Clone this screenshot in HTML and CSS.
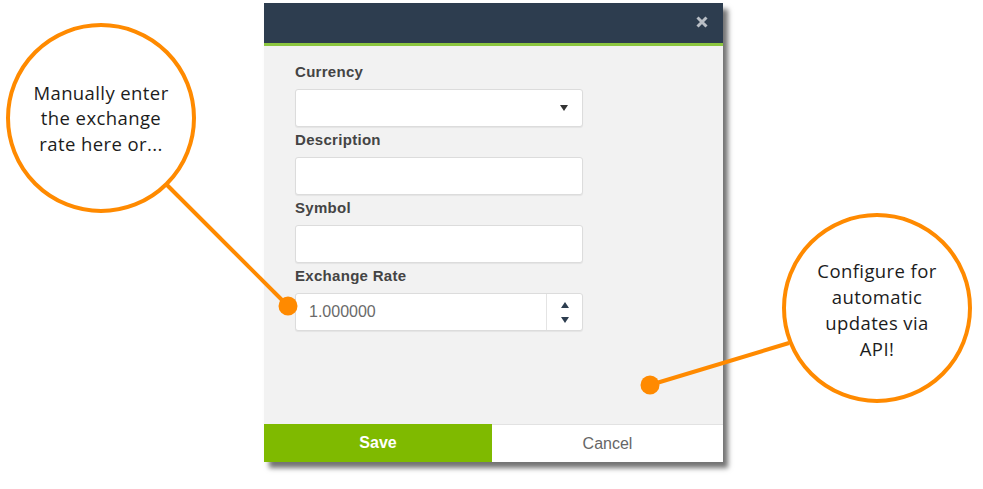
FILE: index.html
```html
<!DOCTYPE html>
<html>
  <head>
    <link rel="stylesheet" href="styles.css">
  </head>
  <body>
    <main class="stage">
      <div class="dialog">
        <header class="dialog-header">
          <svg class="close" width="12" height="12" viewBox="0 0 12 12">
            <path d="M1.5 1.5 L10.5 10.5 M10.5 1.5 L1.5 10.5" />
          </svg>
        </header>
        <form class="dialog-body">
          <label class="field-label">Currency</label>
          <div class="field select">
            <span class="caret"></span>
          </div>
          <label class="field-label">Description</label>
          <div class="field"></div>
          <label class="field-label">Symbol</label>
          <div class="field"></div>
          <label class="field-label">Exchange Rate</label>
          <div class="field number">
            <span class="value">1.000000</span>
            <span class="spinner">
              <span class="arrow up"></span>
              <span class="arrow down"></span>
            </span>
          </div>
        </form>
        <footer class="dialog-footer">
          <button class="btn btn-save" type="button">Save</button>
          <button class="btn btn-cancel" type="button">Cancel</button>
        </footer>
      </div>

      <svg class="connectors" width="983" height="489" viewBox="0 0 983 489">
        <line x1="167" y1="185" x2="288" y2="306" />
        <circle cx="288" cy="306" r="9.5" />
        <line x1="789" y1="343" x2="650" y2="385" />
        <circle cx="650" cy="385" r="9.5" />
      </svg>

      <div class="callout callout-left">
        <p>Manually enter<br>the exchange<br>rate here or...</p>
      </div>
      <div class="callout callout-right">
        <p>Configure for<br>automatic<br>updates via<br>API!</p>
      </div>
    </main>
  </body>
</html>
```

FILE: styles.css
```css
* {
  margin: 0;
  padding: 0;
  box-sizing: border-box;
}

html, body {
  width: 983px;
  height: 489px;
  background: #fff;
  overflow: hidden;
}

.stage {
  position: relative;
  width: 983px;
  height: 489px;
  padding: 3px 0 0 264px;
  font-family: "Liberation Sans", Arial, sans-serif;
}

/* dialog */

.dialog {
  width: 459px;
  display: flex;
  flex-direction: column;
  box-shadow: 5px 6px 5px rgba(0, 0, 0, 0.55);
}

.dialog-header {
  height: 43px;
  background: #2d3d4f;
  border-bottom: 3px solid #8cc63f;
  display: flex;
  justify-content: flex-end;
  align-items: center;
  padding: 0 15px 2px 0;
}

.close path {
  stroke: #b9bfc6;
  stroke-width: 3;
  fill: none;
}

.dialog-body {
  height: 378px;
  background: #f2f2f2;
  padding: 17px 0 0 31px;
  display: flex;
  flex-direction: column;
}

.field-label {
  font-size: 15px;
  font-weight: bold;
  letter-spacing: 0.3px;
  line-height: 18px;
  color: #444;
  margin-bottom: 8px;
}

.field {
  width: 288px;
  height: 38px;
  background: #fff;
  border: 1px solid #dcdcdc;
  border-radius: 3px;
  box-shadow: 0 1px 1px rgba(0, 0, 0, 0.06);
  margin-bottom: 4px;
  display: flex;
  align-items: center;
}

.select {
  justify-content: flex-end;
  padding-right: 14px;
}

.caret {
  width: 0;
  height: 0;
  border-left: 4.5px solid transparent;
  border-right: 4.5px solid transparent;
  border-top: 6px solid #333;
}

.number {
  justify-content: space-between;
}

.value {
  font-size: 16px;
  color: #6a6a6a;
  padding-left: 13px;
}

.spinner {
  width: 36px;
  height: 100%;
  border-left: 1px solid #e4e4e4;
  display: flex;
  flex-direction: column;
  align-items: center;
  justify-content: center;
  gap: 9px;
}

.arrow {
  width: 0;
  height: 0;
  border-left: 4.5px solid transparent;
  border-right: 4.5px solid transparent;
}

.arrow.up {
  border-bottom: 6px solid #2d3d4f;
}

.arrow.down {
  border-top: 6px solid #2d3d4f;
}

.dialog-footer {
  height: 38px;
  display: flex;
}

.btn {
  flex: 1;
  border: 0;
  font-family: "Liberation Sans", Arial, sans-serif;
  font-size: 16px;
  cursor: pointer;
}

.btn-save {
  background: #7fba00;
  color: #fff;
  font-weight: bold;
  flex: 0 0 228px;
}

.btn-cancel {
  background: #fff;
  color: #666;
  border-top: 1px solid #e2e2e2;
}

/* annotations */

.connectors {
  position: absolute;
  left: 0;
  top: 0;
}

.connectors line {
  stroke: #ff8a00;
  stroke-width: 4;
}

.connectors circle {
  fill: #ff8a00;
}

.callout {
  position: absolute;
  width: 190px;
  height: 190px;
  border: 4px solid #ff8a00;
  border-radius: 50%;
  background: #fff;
  display: flex;
  align-items: center;
  justify-content: center;
  text-align: center;
  font-family: "Open Sans", Lato, sans-serif;
  font-size: 18.5px;
  letter-spacing: 0.4px;
  line-height: 25.5px;
  color: #1c1c1c;
}

.callout-left {
  left: 6px;
  top: 23px;
}

.callout-right {
  left: 782px;
  top: 213px;
  line-height: 26px;
}

.callout-right p {
  padding-top: 3px;
}
```
